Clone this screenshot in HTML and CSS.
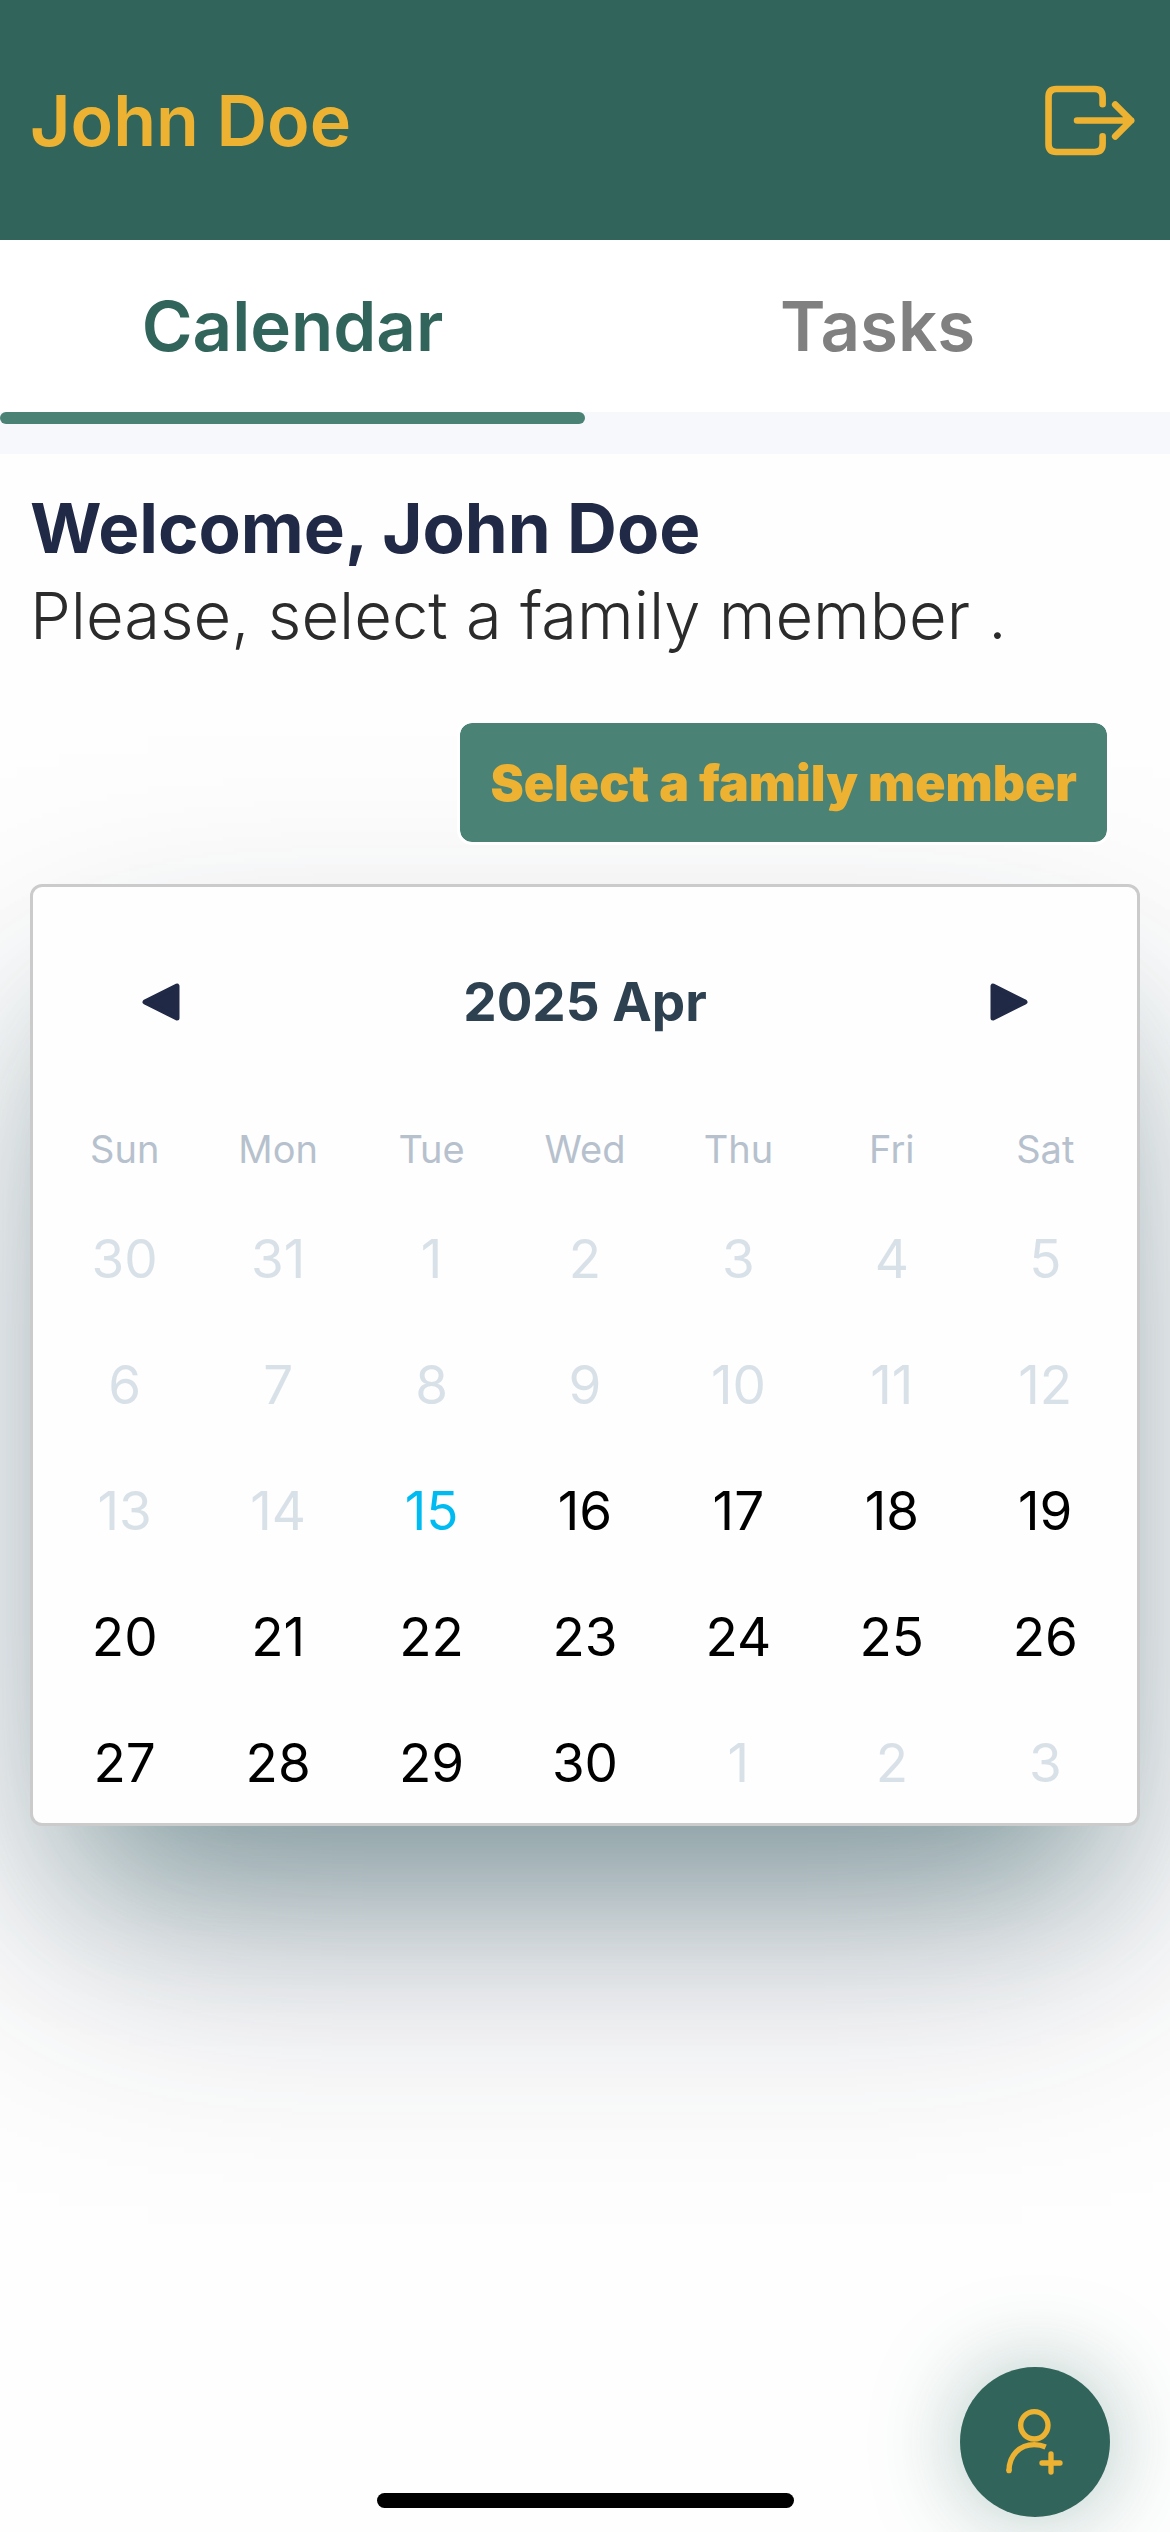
FILE: index.html
```
<!DOCTYPE html>
<html lang="en">
  <head>
    <meta charset="UTF-8" />
    <meta name="viewport" content="width=device-width, initial-scale=1.0" />
    <title>Calendar</title>
    <link rel="stylesheet" href="styles.css">
  </head>
  <body>
    <header class="header">
      <h1 class="user-name">John Doe</h1>
      <button type="button" class="icon-btn" aria-label="Log out">
        <svg class="logout-icon" viewBox="0 0 276 220">
          <path d="M176 61V39Q176 15 152 15H37Q13 15 13 39V181Q13 205 37 205H152Q176 205 176 181V158" />
          <path d="M99 110H262M214 62L262 110L214 158" />
        </svg>
      </button>
    </header>

    <nav class="tabs">
      <a href="#calendar" class="tab active">Calendar</a>
      <a href="#tasks" class="tab">Tasks</a>
    </nav>

    <main class="content" id="calendar">
      <h2 class="welcome">Welcome, John Doe</h2>
      <p class="hint">Please, select a family member .</p>
      <button type="button" class="select-btn">Select a family member</button>

      <section class="calendar">
        <div class="calendar-head">
          <button type="button" class="icon-btn" aria-label="Previous month">
            <svg class="arrow" viewBox="0 0 38 38"><path d="M35 3V35L3 19Z" /></svg>
          </button>
          <h3 class="month">2025 Apr</h3>
          <button type="button" class="icon-btn" aria-label="Next month">
            <svg class="arrow" viewBox="0 0 38 38"><path d="M3 3V35L35 19Z" /></svg>
          </button>
        </div>
        <table class="days">
          <thead>
            <tr>
              <th>Sun</th>
              <th>Mon</th>
              <th>Tue</th>
              <th>Wed</th>
              <th>Thu</th>
              <th>Fri</th>
              <th>Sat</th>
            </tr>
          </thead>
          <tbody id="days_body"></tbody>
        </table>
      </section>
    </main>

    <button type="button" class="fab" aria-label="Add family member">
      <svg class="fab-icon" viewBox="0 0 180 210">
        <circle cx="88" cy="55" r="41" />
        <path d="M12 192C12 145 44 113 88 113Q106 113 122 120" stroke-linecap="butt" />
        <path d="M12 191V190" />
        <path d="M138 141V195M111 168H165" />
      </svg>
    </button>
    <div class="home-bar"></div>

    <script>
      const today = 15;
      const body = document.getElementById("days_body");

      // April 2025 starts on a Tuesday, so the grid opens with two days of March
      for (let week = 0; week < 5; week++) {
        let row = body.insertRow();
        for (let i = 0; i < 7; i++) {
          let day = week * 7 + i - 1;
          let date = new Date(2025, 3, day);
          let btn = document.createElement("button");
          btn.type = "button";
          btn.className = "day";
          btn.textContent = date.getDate();
          if (day < today || day > 30) btn.disabled = true;
          if (day == today) btn.classList.add("today");
          row.insertCell().appendChild(btn);
        }
      }
    </script>
  </body>
</html>
```

FILE: styles.css
```
* {
  box-sizing: border-box;
}

body {
  margin: 0;
  min-height: 100vh;
  background: #fefefe;
  font-family: Inter, "Liberation Sans", sans-serif;
  overflow-x: hidden;
}

h1,
h2,
h3,
p {
  margin: 0;
}

button {
  font-family: inherit;
  border: none;
  cursor: pointer;
}

.icon-btn {
  display: flex;
  padding: 0;
  background: none;
}

.header {
  display: flex;
  justify-content: space-between;
  align-items: center;
  height: 240px;
  padding: 0 34px 0 30px;
  background: #31655b;
}

.user-name {
  color: #edb232;
  font-size: 70px;
  font-weight: 600;
}

.logout-icon {
  width: 92px;
  height: 73px;
  fill: none;
  stroke: #edb232;
  stroke-width: 20;
  stroke-linecap: round;
  stroke-linejoin: round;
}

.tabs {
  display: flex;
  height: 214px;
  background: linear-gradient(#fff 172px, #f6f8fc 172px);
}

.tab {
  flex: 1;
  color: #808080;
  font-size: 69px;
  font-weight: 600;
  line-height: 172px;
  text-align: center;
  text-decoration: none;
}

.tab.active {
  color: #31655b;
}

.tab.active::after {
  content: "";
  display: block;
  height: 12px;
  border-radius: 6px;
  background: #4a8276;
}

.content {
  display: flex;
  flex-direction: column;
  padding: 30px;
}

.welcome {
  color: #202945;
  font-size: 69px;
  font-weight: 700;
  line-height: 88px;
}

.hint {
  color: #2b2b2b;
  font-size: 65px;
  font-weight: 300;
  line-height: 88px;
}

.select-btn {
  align-self: flex-end;
  position: relative;
  height: 125px;
  margin: 60px 30px 39px;
  padding: 0 30px;
  border: 3px solid #fff;
  border-radius: 15px;
  background: #4a8276;
  background-clip: padding-box;
  color: #edb232;
  font-size: 50px;
  font-weight: 900;
}

.calendar {
  padding: 15px 15px 0;
  border: 3px solid #cbcbcb;
  border-radius: 12px;
  background: #fefefe;
  box-shadow: 0 125px 250px -30px rgba(32, 41, 69, 0.34),
    0 100px 140px -50px rgba(49, 121, 108, 0.4);
}

.calendar-head {
  display: flex;
  justify-content: space-between;
  align-items: center;
  height: 200px;
  padding: 0 94px;
}

.arrow {
  width: 38px;
  height: 38px;
  fill: #202945;
  stroke: #202945;
  stroke-width: 5;
  stroke-linejoin: round;
}

.month {
  color: #2d4150;
  font-size: 53px;
  font-weight: 700;
}

.days {
  width: 100%;
  margin-bottom: -3px;
  border-collapse: collapse;
  table-layout: fixed;
}

.days th {
  height: 94px;
  padding: 0;
  color: #b6c1cd;
  font-size: 38px;
  font-weight: 400;
}

.days td {
  height: 126px;
  padding: 0;
}

.day {
  width: 100%;
  height: 96px;
  padding: 0;
  background: none;
  color: #000;
  font-size: 53px;
}

.day:disabled {
  color: #d9e1e8;
}

.day.today {
  color: #00bbf2;
}

.fab {
  position: fixed;
  right: 60px;
  bottom: 15px;
  display: flex;
  justify-content: center;
  align-items: center;
  width: 150px;
  height: 150px;
  padding: 0;
  border-radius: 50%;
  background: #31655b;
  box-shadow: 0 0 90px rgba(49, 111, 98, 0.4);
}

.fab-icon {
  width: 60px;
  height: 70px;
  fill: none;
  stroke: #edb232;
  stroke-width: 16;
  stroke-linecap: round;
}

.home-bar {
  position: fixed;
  bottom: 24px;
  left: 50%;
  width: 417px;
  height: 15px;
  margin-left: -208px;
  border-radius: 8px;
  background: #000;
}
```
